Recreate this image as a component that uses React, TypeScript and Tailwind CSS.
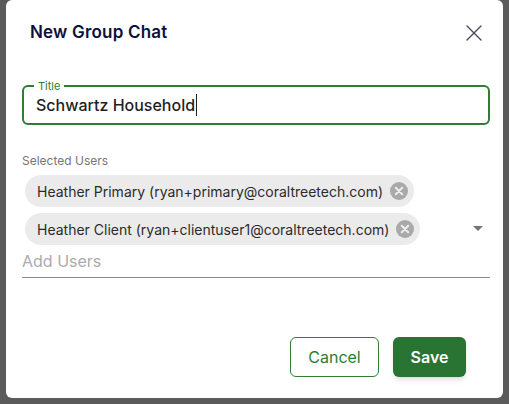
import { X } from 'lucide-react';

const green = '#2e7d32';

type ChipProps = {
  label: string;
};

const UserChip = ({ label }: ChipProps) => (
  <div className="inline-flex h-8 items-center gap-[7px] self-start rounded-full bg-[#ebebeb] pl-3 pr-[6px] text-[14px] text-[#2b2b2b]">
    <span className="whitespace-nowrap">{label}</span>
    <svg width="18" height="18" viewBox="0 0 18 18" aria-hidden="true">
      <circle cx="9" cy="9" r="9" fill="#a9a9a9" />
      <path d="M5.8 5.8l6.4 6.4M12.2 5.8l-6.4 6.4" stroke="#ebebeb" strokeWidth="2.2" strokeLinecap="round" />
    </svg>
  </div>
);

export default function App() {
  return (
    <div
      className="h-[404px] w-[509px] overflow-hidden bg-[#5b5b5b] pl-[6px]"
      style={{ fontFamily: 'Inter, "Liberation Sans", sans-serif' }}
    >
      <div className="flex h-[398px] w-[497px] flex-col rounded-md bg-white">
        <header className="flex items-center justify-between pl-6 pr-[15px] pt-[19px]">
          <h1 className="text-[17px] font-semibold tracking-[0.2px] text-[#0f0f3d]">New Group Chat</h1>
          <X size={28} strokeWidth={1.2} className="text-[#4a4a5a]" />
        </header>

        <div className="relative ml-4 mr-[13px] mt-[38px] h-10 rounded-md border-2 border-[#2e7d32] px-3">
          <span className="absolute -top-[9px] left-[10px] bg-white px-1 text-[11px] leading-4 text-[#2e7d32]">
            Title
          </span>
          <div className="flex h-full items-center text-[16px] font-medium text-[#1f1f1f]">
            Schwartz Household
            <span className="ml-px inline-block h-[22px] w-px bg-[#1f1f1f]" />
          </div>
        </div>

        <div className="ml-4 mr-[13px] mt-[27px] flex flex-col">
          <span className="text-[12px] text-[#777]">Selected Users</span>
          <div className="relative mt-[5px] flex flex-col gap-[6px] pl-[3px]">
            <UserChip label="Heather Primary (ryan+primary@coraltreetech.com)" />
            <UserChip label="Heather Client (ryan+clientuser1@coraltreetech.com)" />
            <svg
              width="10"
              height="5"
              viewBox="0 0 10 5"
              className="absolute bottom-[14px] right-[7px]"
              aria-hidden="true"
            >
              <path d="M0 0h10L5 5z" fill="#757575" />
            </svg>
          </div>
          <div className="flex h-[33px] items-center border-b border-[#8c8c8c] text-[16px] text-[#ababab]">
            Add Users
          </div>
        </div>

        <footer className="mt-auto flex justify-end gap-[14px] pb-[21px] pr-[37px]">
          <button
            type="button"
            className="h-10 w-[89px] rounded-md border border-[#2e7d32] bg-white text-[16px]"
            style={{ color: green }}
          >
            Cancel
          </button>
          <button
            type="button"
            className="h-10 w-[73px] rounded-md bg-[#2a7433] text-[16px] font-semibold text-white shadow-md"
          >
            Save
          </button>
        </footer>
      </div>
    </div>
  );
}
